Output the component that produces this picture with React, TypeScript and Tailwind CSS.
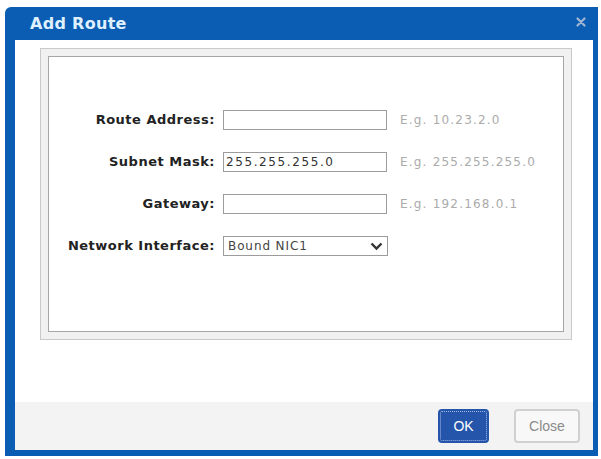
import React from "react";

const BLUE = "#0b5db3";

function Row({ label, children, hint }: { label: string; children: React.ReactNode; hint?: string }) {
  return (
    <div className="flex items-center h-[20px]">
      <div className="w-[167px] shrink-0 text-right pr-[1px] text-[13px] font-bold tracking-[0.5px] text-[#222]" style={{ fontFamily: '"DejaVu Sans", Verdana, sans-serif' }}>
        {label}
      </div>
      <div className="ml-[7px] w-[164px] h-[20px] shrink-0">{children}</div>
      {hint && (
        <div className="ml-[13px] text-[12px] tracking-[1.2px] text-[#ababab]" style={{ fontFamily: '"DejaVu Sans", Verdana, sans-serif' }}>
          {hint}
        </div>
      )}
    </div>
  );
}

function Input({ value }: { value?: string }) {
  return (
    <div className="w-full h-full border border-[#9c9c9c] bg-white flex items-center pl-[2px] text-[12px] tracking-[1.6px] text-[#333]" style={{ fontFamily: '"DejaVu Sans", Verdana, sans-serif' }}>
      {value}
    </div>
  );
}

export default function App() {
  return (
    <div className="w-[601px] h-[459px] bg-white overflow-hidden pt-[7px] pl-[5px]">
      <div className="w-[593px] h-[449px] flex flex-col border-l-[10px] border-r-[5px] border-b-[6px] rounded-tl-[6px]" style={{ borderColor: BLUE }}>
        <div className="h-[33px] shrink-0 flex items-center justify-between pl-[15px] pr-[7px]" style={{ backgroundColor: BLUE }}>
          <span className="text-[16px] font-bold tracking-[0.3px] text-[#dff0ff] mt-[1px]" style={{ fontFamily: '"DejaVu Sans", Verdana, sans-serif' }}>
            Add Route
          </span>
          <svg width="10" height="10" viewBox="0 0 10 10" className="mb-[3px]">
            <path d="M1.5 1.5 L8.5 8.5 M8.5 1.5 L1.5 8.5" stroke="#9fb6d3" strokeWidth="2.2" strokeLinecap="round" />
          </svg>
        </div>
        <div className="flex-1 bg-white pt-[8px] pl-[25px] pr-[21px]">
          <div className="h-[292px] border border-[#c9c9c9] bg-[#f1f1f1] p-[7px]">
            <div className="h-full border border-[#a6a6a6] bg-white pt-[53px] flex flex-col gap-[22px]">
              <Row label="Route Address:" hint="E.g. 10.23.2.0">
                <Input />
              </Row>
              <Row label="Subnet Mask:" hint="E.g. 255.255.255.0">
                <Input value="255.255.255.0" />
              </Row>
              <Row label="Gateway:" hint="E.g. 192.168.0.1">
                <Input />
              </Row>
              <Row label="Network Interface:">
                <div className="w-[165px] h-full border border-[#9c9c9c] bg-white flex items-center justify-between pl-[4px] pr-[4px] text-[12px] tracking-[0.9px] text-[#444]" style={{ fontFamily: '"DejaVu Sans", Verdana, sans-serif' }}>
                  <span>Bound NIC1</span>
                  <svg width="13" height="9" viewBox="0 0 13 9">
                    <path d="M1.5 1.5 L6.5 6.5 L11.5 1.5" fill="none" stroke="#333" strokeWidth="2.4" />
                  </svg>
                </div>
              </Row>
            </div>
          </div>
        </div>
        <div className="h-[48px] shrink-0 bg-[#f3f3f3] flex items-center justify-end pr-[13px] gap-[25px]">
          <button className="w-[51px] h-[34px] rounded-[4px] bg-[#2455ab] flex items-center justify-center p-[2px]">
            <span className="w-full h-full border border-dotted border-[#9fb8e4] rounded-[2px] flex items-center justify-center text-[14px] text-white" style={{ fontFamily: '"Liberation Sans", Arial, sans-serif' }}>
              OK
            </span>
          </button>
          <button className="w-[66px] h-[34px] rounded-[4px] border-2 border-[#d0d0d0] bg-[#f8f8f8] flex items-center justify-center text-[14px] text-[#8a8a8a]" style={{ fontFamily: '"Liberation Sans", Arial, sans-serif' }}>
            Close
          </button>
        </div>
      </div>
    </div>
  );
}
